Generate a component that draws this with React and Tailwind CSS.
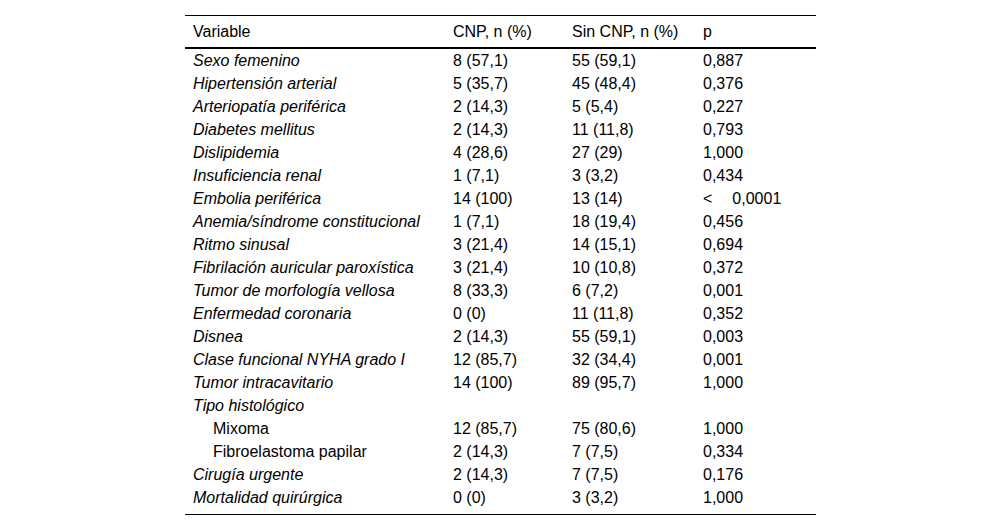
const rows = [
  { v: "Sexo femenino", a: "8 (57,1)", b: "55 (59,1)", p: "0,887" },
  { v: "Hipertensión arterial", a: "5 (35,7)", b: "45 (48,4)", p: "0,376" },
  { v: "Arteriopatía periférica", a: "2 (14,3)", b: "5 (5,4)", p: "0,227" },
  { v: "Diabetes mellitus", a: "2 (14,3)", b: "11 (11,8)", p: "0,793" },
  { v: "Dislipidemia", a: "4 (28,6)", b: "27 (29)", p: "1,000" },
  { v: "Insuficiencia renal", a: "1 (7,1)", b: "3 (3,2)", p: "0,434" },
  { v: "Embolia periférica", a: "14 (100)", b: "13 (14)", p: "lt" },
  { v: "Anemia/síndrome constitucional", a: "1 (7,1)", b: "18 (19,4)", p: "0,456" },
  { v: "Ritmo sinusal", a: "3 (21,4)", b: "14 (15,1)", p: "0,694" },
  { v: "Fibrilación auricular paroxística", a: "3 (21,4)", b: "10 (10,8)", p: "0,372" },
  { v: "Tumor de morfología vellosa", a: "8 (33,3)", b: "6 (7,2)", p: "0,001" },
  { v: "Enfermedad coronaria", a: "0 (0)", b: "11 (11,8)", p: "0,352" },
  { v: "Disnea", a: "2 (14,3)", b: "55 (59,1)", p: "0,003" },
  { v: "Clase funcional NYHA grado I", a: "12 (85,7)", b: "32 (34,4)", p: "0,001" },
  { v: "Tumor intracavitario", a: "14 (100)", b: "89 (95,7)", p: "1,000" },
  { v: "Tipo histológico", a: "", b: "", p: "" },
  { v: "Mixoma", a: "12 (85,7)", b: "75 (80,6)", p: "1,000", sub: true },
  { v: "Fibroelastoma papilar", a: "2 (14,3)", b: "7 (7,5)", p: "0,334", sub: true },
  { v: "Cirugía urgente", a: "2 (14,3)", b: "7 (7,5)", p: "0,176" },
  { v: "Mortalidad quirúrgica", a: "0 (0)", b: "3 (3,2)", p: "1,000" },
];

const cols = "grid grid-cols-[260px_119px_131px_121px]";

export default function App() {
  return (
    <div className="min-h-[530px] bg-white pt-[15px] text-[16px] text-black" style={{ fontFamily: '"Liberation Sans", Arial, sans-serif' }}>
      <div className="w-[631px] ml-[185px] border-t border-b border-black pb-[5px]">
        <div className={`${cols} h-[33px] items-center border-b-2 border-black leading-[23px]`}>
          <div className="pl-2">Variable</div>
          <div className="pl-2">CNP, n (%)</div>
          <div className="pl-2">Sin CNP, n (%)</div>
          <div className="pl-2">p</div>
        </div>
        {rows.map((r) => (
          <div key={r.v} className={`${cols} h-[23px] items-center leading-[23px]`}>
            <div className={r.sub ? "pl-[28px]" : "pl-2 italic"}>{r.v}</div>
            <div className="pl-2">{r.a}</div>
            <div className="pl-2">{r.b}</div>
            <div className="pl-2">
              {r.p === "lt" ? (
                <span>
                  &lt;<span className="ml-[20px]">0,0001</span>
                </span>
              ) : (
                r.p
              )}
            </div>
          </div>
        ))}
      </div>
    </div>
  );
}
